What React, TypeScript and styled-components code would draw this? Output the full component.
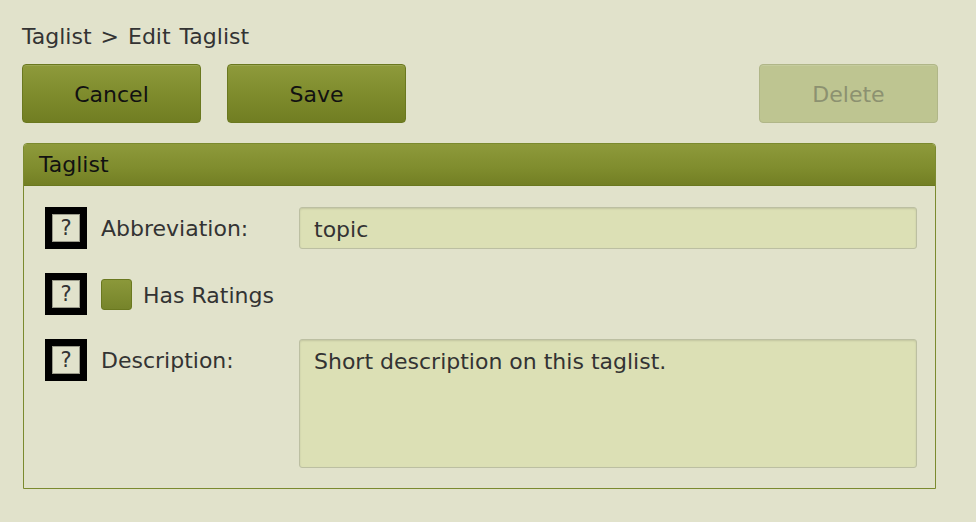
import React from 'react';
import styled, { createGlobalStyle } from 'styled-components';

const GlobalStyle = createGlobalStyle`
  html, body {
    margin: 0;
    padding: 0;
    background: #e1e2cb;
  }
  body {
    font-family: "DejaVu Sans", Verdana, sans-serif;
    color: #333;
  }
`;

const Page = styled.div`
  padding: 23px 38px 30px 22px;
  width: 916px;
`;

const Breadcrumb = styled.div`
  font-size: 22px;
  line-height: 28px;
  color: #333;
  margin-bottom: 13px;
  word-spacing: 2px;
`;

const Toolbar = styled.div`
  display: flex;
  gap: 26px;
  margin-bottom: 20px;
`;

const Button = styled.button<{ $disabled?: boolean; $push?: boolean }>`
  width: 179px;
  height: 59px;
  box-sizing: border-box;
  border-radius: 4px;
  border: 1px solid ${p => (p.$disabled ? '#b0b688' : '#6a781f')};
  background: ${p =>
    p.$disabled
      ? '#bec591'
      : 'linear-gradient(to bottom, #8e9a3b 0%, #7f8c2d 50%, #717e22 100%)'};
  color: ${p => (p.$disabled ? '#8c9170' : '#111')};
  font-family: "DejaVu Sans", Verdana, sans-serif;
  font-size: 22px;
  padding: 2px 0 0;
  margin-left: ${p => (p.$push ? 'auto' : '0')};
  box-shadow: inset 0 1px 0 rgba(255, 255, 255, 0.12);
`;

const Panel = styled.div`
  margin-left: 1px;
  width: 913px;
  box-sizing: border-box;
  border: 1px solid #7b8a2f;
  border-radius: 4px 4px 0 0;
`;

const PanelHeader = styled.div`
  height: 42px;
  box-sizing: border-box;
  padding-left: 15px;
  display: flex;
  align-items: center;
  font-size: 22px;
  color: #111;
  background: linear-gradient(to bottom, #8e9a3b 0%, #7f8c2d 60%, #737f24 100%);
  border-bottom: 1px solid #6a781f;
  border-radius: 3px 3px 0 0;
`;

const PanelBody = styled.div`
  padding: 21px 18px 20px 21px;
  display: flex;
  flex-direction: column;
  gap: 24px;
`;

const Row = styled.div<{ $top?: boolean }>`
  display: flex;
  align-items: ${p => (p.$top ? 'flex-start' : 'center')};
`;

const Help = styled.div`
  width: 42px;
  height: 42px;
  box-sizing: border-box;
  border: 7px solid #000;
  flex: none;
  display: flex;
  align-items: center;
  justify-content: center;
  font-size: 21px;
  color: #333;
  background: #e1e2cb;
  box-shadow: inset 0 0 0 1px #9a9a8a;
`;

const Label = styled.div<{ $width?: number }>`
  width: ${p => p.$width ?? 198}px;
  padding: 2px 0 0 14px;
  box-sizing: border-box;
  font-size: 22px;
  line-height: 40px;
  color: #333;
  flex: none;
`;

const TextInput = styled.div`
  flex: 1;
  height: 42px;
  box-sizing: border-box;
  background: #dce0b5;
  border: 1px solid #bcbfa2;
  border-radius: 3px;
  box-shadow: inset 0 1px 2px rgba(0, 0, 0, 0.12);
  padding: 2px 14px 0;
  display: flex;
  align-items: center;
  font-size: 22px;
  color: #333;
`;

const TextArea = styled(TextInput)`
  height: 129px;
  align-items: flex-start;
  padding-top: 9px;
`;

const Checkbox = styled.div`
  width: 31px;
  height: 31px;
  box-sizing: border-box;
  margin-left: 14px;
  border-radius: 3px;
  border: 1px solid #6a781f;
  background: linear-gradient(to bottom, #8b983a, #76842a);
  flex: none;
`;

const CheckLabel = styled.div`
  font-size: 22px;
  margin-left: 11px;
  padding-top: 2px;
  color: #333;
`;

export default function App() {
  return (
    <Page>
      <GlobalStyle />
      <Breadcrumb>Taglist &gt; Edit Taglist</Breadcrumb>
      <Toolbar>
        <Button>Cancel</Button>
        <Button>Save</Button>
        <Button $disabled $push disabled>
          Delete
        </Button>
      </Toolbar>
      <Panel>
        <PanelHeader>Taglist</PanelHeader>
        <PanelBody>
          <Row>
            <Help>?</Help>
            <Label $width={212}>Abbreviation:</Label>
            <TextInput>topic</TextInput>
          </Row>
          <Row>
            <Help>?</Help>
            <Checkbox />
            <CheckLabel>Has Ratings</CheckLabel>
          </Row>
          <Row $top>
            <Help>?</Help>
            <Label $width={212}>Description:</Label>
            <TextArea>Short description on this taglist.</TextArea>
          </Row>
        </PanelBody>
      </Panel>
    </Page>
  );
}
